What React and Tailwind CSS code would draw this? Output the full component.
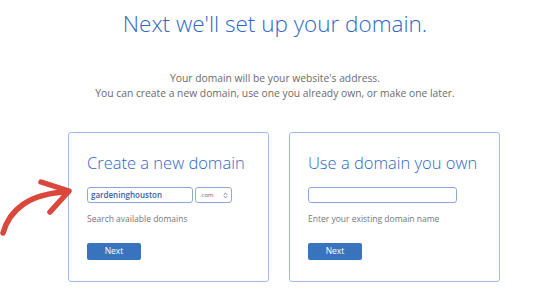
import { ChevronsUpDown } from 'lucide-react';

const font = { fontFamily: '"Open Sans", "Liberation Sans", sans-serif' };

function Arrow() {
  return (
    <svg className="absolute left-0 top-[170px]" width="80" height="70" viewBox="0 170 80 70">
      <path d="M3 233 C 9 211, 28 193, 68 192" fill="none" stroke="#d9483b" strokeWidth="5.5" strokeLinecap="round" />
      <path d="M41 182 L69 191 L50 212" fill="none" stroke="#d9483b" strokeWidth="5.5" strokeLinecap="round" strokeLinejoin="round" />
    </svg>
  );
}

function Card({ title, width, children, hint }) {
  return (
    <div className={`${width} h-[150px] rounded-[3px] border border-[#a3bce6] bg-white pl-[18px] pt-[20px]`}>
      <h2 className="text-[16.5px] font-light leading-[20px] text-[#2d68c6]">{title}</h2>
      <div className="mt-[14px] flex h-[16px] gap-[2px]">{children}</div>
      <p className="mt-[10px] text-[8.5px] leading-[12px] text-[#777]">{hint}</p>
      <button className="mt-[18px] h-[17px] w-[54px] rounded-[2px] bg-[#3a73bd] text-[8.5px] text-white">
        Next
      </button>
    </div>
  );
}

export default function App() {
  return (
    <div className="relative h-[289px] w-[550px] overflow-hidden bg-white" style={font}>
      <h1 className="pt-[10px] text-center text-[22.5px] font-light leading-[28px] text-[#2d68c6]">
        Next we'll set up your domain.
      </h1>
      <div className="mt-[33px] text-center text-[10.3px] leading-[15px] text-[#6b6b6b]">
        <p>Your domain will be your website's address.</p>
        <p>You can create a new domain, use one you already own, or make one later.</p>
      </div>
      <div className="mt-[31px] flex gap-[20px] pl-[68px]">
        <Card title="Create a new domain" width="w-[201px]" hint="Search available domains">
          <div className="flex w-[106px] items-center rounded-[3px] border border-[#8fa9d6] px-[3px] text-[8px] font-semibold text-[#3a5ea6]">
            gardeninghouston
          </div>
          <div className="flex w-[37px] items-center justify-between rounded-[3px] border border-[#8fa9d6] pl-[4px] pr-[2px] text-[6px] text-[#666]">
            .com
            <ChevronsUpDown size={7} strokeWidth={2.5} className="text-[#555]" />
          </div>
        </Card>
        <Card title="Use a domain you own" width="w-[211px]" hint="Enter your existing domain name">
          <div className="w-[149px] rounded-[3px] border border-[#8fa9d6]" />
        </Card>
      </div>
      <Arrow />
    </div>
  );
}
